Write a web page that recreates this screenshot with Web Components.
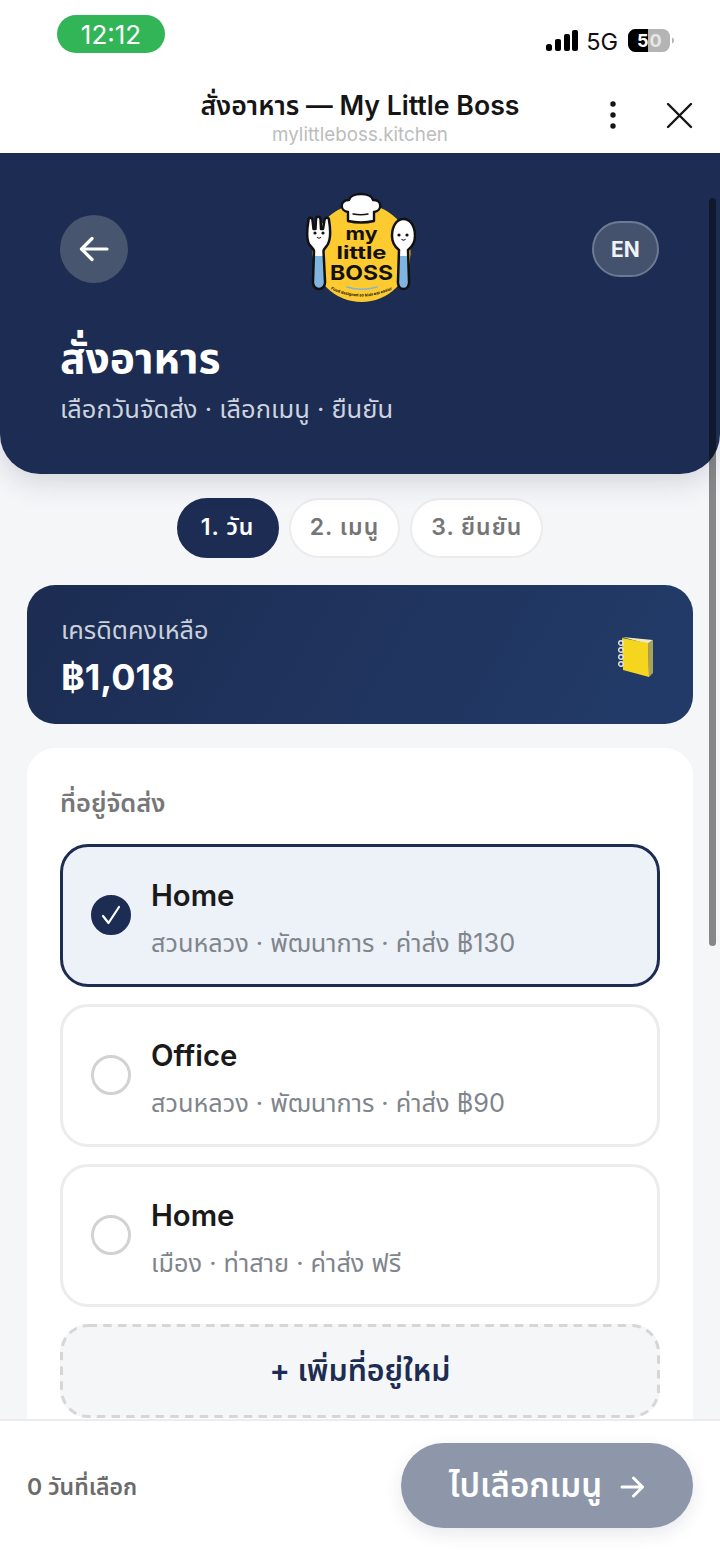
<!doctype html>
<html lang="th">
<head>
<meta charset="utf-8">
<title>สั่งอาหาร — My Little Boss</title>
<style>
  html, body { margin: 0; padding: 0; height: 100%; }
  body {
    font-family: Inter, "Noto Sans Thai", "Noto Sans Thai Looped", "Noto Sans", "Liberation Sans", sans-serif;
    background: #f5f6f8;
    overflow: hidden;
  }
  app-shell { width: 720px; height: 1558px; }
</style>
</head>
<body>

<template id="status-tmpl">
  <style>
    :host { display: flex; height: 70px; background: #fff; align-items: flex-start; justify-content: space-between; padding: 15px 46px 0 57px; box-sizing: border-box; }
    .time { width: 108px; height: 38px; border-radius: 19px; background: #32b557; color: #fff; font-size: 26px; line-height: 40px; text-align: center; }
    .right { display: flex; align-items: center; gap: 10px; margin-top: 14px; height: 24px; font-size: 23.500px; color: #111; }
    svg { display: block; }
    .bars { margin-right: -2px; margin-top: -1px; }
  </style>
  <div class="time"><slot name="time"></slot></div>
  <div class="right">
    <svg class="bars" width="32" height="21" viewBox="0 0 32 21"><rect x="0" y="14" width="6" height="7" rx="2.500"/><rect x="9" y="9" width="6" height="12" rx="2"/><rect x="18" y="4" width="6" height="17" rx="2"/><rect x="26" y="0" width="6" height="21" rx="2"/></svg>
    <slot name="net"></slot>
    <svg width="46" height="23" viewBox="0 0 46 23" font-family="Inter, sans-serif" font-size="18" font-weight="700" style="margin-top:-2px">
      <rect x="0" y="0" width="42" height="23" rx="7.500" fill="#b4b4b4"/>
      <path d="M7.500 0H20v23H7.500A7.500 7.500 0 0 1 0 15.500v-8A7.500 7.500 0 0 1 7.500 0z" fill="#000"/>
      <path d="M44 8.500c1.500.5 2 1.800 2 3s-.5 2.500-2 3z" fill="#b4b4b4"/>
      <text x="9" y="18" fill="#fff">5</text>
      <text x="21.500" y="18" fill="#e6e6e6">0</text>
    </svg>
  </div>
</template>

<template id="browser-tmpl">
  <style>
    :host { display: flex; flex-direction: column; align-items: center; height: 83px; background: #fff; position: relative; color: #151515; }
    .title { font-size: 26.700px; font-weight: 600; line-height: 36px; margin-top: 17px; }
    .domain { font-size: 18.800px; line-height: 24px; color: #bcbcbc; }
    .actions { position: absolute; right: 27px; top: 31px; display: flex; gap: 50px; align-items: center; }
    svg { display: block; }
  </style>
  <div class="title"><slot name="title"></slot></div>
  <div class="domain"><slot name="domain"></slot></div>
  <div class="actions">
    <svg width="6" height="28" viewBox="0 0 6 28" fill="#151515"><circle cx="3" cy="3" r="2.700"/><circle cx="3" cy="14" r="2.700"/><circle cx="3" cy="25" r="2.700"/></svg>
    <svg width="27" height="27" viewBox="0 0 27 27" stroke="#151515" stroke-width="2.400" stroke-linecap="round"><path d="M2 2l23 23M25 2L2 25"/></svg>
  </div>
</template>

<template id="logo-tmpl">
  <style>
    :host { display: block; width: 112px; height: 118px; }
    svg { display: block; }
    text { font-family: Inter, "Liberation Sans", sans-serif; }
  </style>
  <svg width="112" height="118" viewBox="0 0 112 118">
    <defs>
      <path id="fork" d="M4.500 29C4.500 26 8 26 8.500 29L9.500 38H11.500L12 28C12 25 16 25 16.500 28L17 38H19L20.500 29C21 26 25 26 25 29C26.500 38 26.500 48 24 53C22.500 56 20 57 19.500 60L21 90C21.500 95 18.500 98 15 98C11.500 98 8.500 95 9 90L10 60C9.500 57 7 56 5 53C2.500 48 3 38 4.500 29Z"/>
      <path id="spoon" d="M99.500 28C92 28 88 36 88 45C88 52 91 56 95 59L94 90C93.500 95 96 98 99.500 98C103 98 105.500 95 105 90L104 59C108 56 111 52 111 45C111 36 107 28 99.500 28Z"/>
      <clipPath id="fork-clip"><use href="#fork"/></clipPath>
      <clipPath id="spoon-clip"><use href="#spoon"/></clipPath>
      <path id="arc" d="M22 96Q57 115 93 96"/>
    </defs>
    <circle cx="57.500" cy="62" r="49" fill="#fdca30"/>
    <!-- chef hat -->
    <path d="M44 30V21C36 20 35 9 45 9C47 1 67 1 69 9C79 9 78 20 70 21V30Q57 33 44 30Z" fill="#fff" stroke="#111" stroke-width="2.400" stroke-linejoin="round"/>
    <path d="M49 23q8 1.500 15 0" fill="none" stroke="#111" stroke-width="1.500" stroke-linecap="round"/>
    <!-- fork -->
    <use href="#fork" fill="#fff"/>
    <rect x="0" y="65" width="30" height="35" fill="#7fb5de" clip-path="url(#fork-clip)"/>
    <use href="#fork" fill="none" stroke="#111" stroke-width="2.500" stroke-linejoin="round"/>
    <circle cx="11" cy="42" r="1.600" fill="#111"/><circle cx="19" cy="42" r="1.600" fill="#111"/>
    <path d="M13 46q2 2.500 4 0" fill="none" stroke="#111" stroke-width="1.100"/>
    <!-- spoon -->
    <use href="#spoon" fill="#fff"/>
    <rect x="85" y="65" width="30" height="35" fill="#7fb5de" clip-path="url(#spoon-clip)"/>
    <use href="#spoon" fill="none" stroke="#111" stroke-width="2.500" stroke-linejoin="round"/>
    <circle cx="95" cy="44" r="1.600" fill="#111"/><circle cx="103" cy="44" r="1.600" fill="#111"/>
    <path d="M97.500 48q2 2.500 4 0" fill="none" stroke="#111" stroke-width="1.100"/>
    <!-- wordmark, stretched because the real logo face is wider than Inter -->
    <text x="57.500" y="49" text-anchor="middle" font-size="18" font-weight="700" textLength="32" lengthAdjust="spacingAndGlyphs" fill="#111">my</text>
    <text x="57.500" y="68" text-anchor="middle" font-size="18" font-weight="700" textLength="50" lengthAdjust="spacingAndGlyphs" fill="#111">little</text>
    <text x="57.500" y="89" text-anchor="middle" font-size="20.500" font-weight="700" textLength="63" lengthAdjust="spacingAndGlyphs" fill="#111">BOSS</text>
    <path d="M43 96q14.500 4.500 30 0" fill="none" stroke="#7fb5de" stroke-width="1.600" stroke-linecap="round"/>
    <text font-size="4" font-weight="700" fill="#111"><textPath href="#arc" startOffset="50%" text-anchor="middle">Food designed so kids eat easier</textPath></text>
  </svg>
</template>

<template id="hero-tmpl">
  <style>
    :host { display: block; height: 321px; box-sizing: border-box; padding: 39px 61px 0 60px; background: #1c2c52; color: #fff; border-radius: 0 0 40px 40px; box-shadow: 0 8px 28px rgba(28,44,82,.16); position: relative; z-index: 1; }
    .top { display: flex; align-items: center; justify-content: space-between; height: 116px; }
    .back { width: 68px; height: 68px; border-radius: 50%; background: #48556f; display: flex; align-items: center; justify-content: center; margin-top: -2px; }
    .lang { width: 67px; height: 56px; box-sizing: border-box; border: 2px solid #6d7a92; border-radius: 28px; background: #45526d; font-size: 21px; font-weight: 700; display: flex; align-items: center; justify-content: center; color: #f0f2f6; margin-top: -2px; }
    h1 { margin: 22px 0 0; font-size: 42.500px; font-weight: 700; line-height: 56px; }
    p { margin: 6px 0 0; font-size: 25.500px; line-height: 34px; color: #cdd3df; }
    svg { display: block; }
  </style>
  <div class="top">
    <div class="back"><svg width="30" height="26" viewBox="0 0 30 26" fill="none" stroke="#fff" stroke-width="3.200" stroke-linecap="round" stroke-linejoin="round"><path d="M28 13H3M13 2.500L2.500 13 13 23.500"/></svg></div>
    <slot name="logo"></slot>
    <div class="lang"><slot name="lang"></slot></div>
  </div>
  <h1><slot name="title"></slot></h1>
  <p><slot name="sub"></slot></p>
</template>

<template id="step-tmpl">
  <style>
    :host { display: flex; align-items: center; justify-content: center; height: 60px; box-sizing: border-box; padding: 0 19px; border-radius: 30px; background: #fff; border: 2px solid #ececee; color: #757575; font-size: 23px; font-weight: 600; letter-spacing: 1px; }
    :host([active]) { background: #1c2c52; border-color: #1c2c52; color: #fff; min-width: 102px; }
  </style>
  <slot></slot>
</template>

<template id="credit-tmpl">
  <style>
    :host { display: flex; align-items: center; justify-content: space-between; height: 139px; box-sizing: border-box; margin: 27px 27px 0; padding: 4px 39px 0 34px; border-radius: 28px; background: linear-gradient(120deg, #1c2c52, #223a67 90%); color: #fff; }
    .label { font-size: 25.400px; line-height: 36px; color: #c9d0dc; margin-top: -1px; }
    .amount { font-size: 36px; font-weight: 700; line-height: 48px; margin-top: 5px; }
    svg { display: block; }
  </style>
  <div>
    <div class="label"><slot name="label"></slot></div>
    <div class="amount"><slot name="amount"></slot></div>
  </div>
  <svg width="36" height="40" viewBox="0 0 36 40">
    <path d="M4 0L35 3L30 7Z" fill="#efe9c4"/>
    <path d="M30 6L35 3V36L31 40Z" fill="#a9a25a"/>
    <path d="M4 1L30 6L31 40L5 33Z" fill="#f6d51f"/>
    <g fill="none" stroke="#e4e4e4" stroke-width="1.400"><circle cx="3" cy="6" r="2.300"/><circle cx="3" cy="13" r="2.300"/><circle cx="3" cy="20" r="2.300"/><circle cx="3" cy="27" r="2.300"/></g>
  </svg>
</template>

<template id="section-tmpl">
  <style>
    :host { display: block; margin: 24px 27px 0; padding: 37px 33px 40px; background: #fff; border-radius: 28px 28px 0 0; }
    .label { font-size: 25.400px; font-weight: 600; line-height: 36px; color: #777; margin-bottom: 23px; }
    .list { display: flex; flex-direction: column; gap: 17px; }
  </style>
  <div class="label"><slot name="label"></slot></div>
  <div class="list"><slot></slot></div>
</template>

<template id="address-tmpl">
  <style>
    :host { display: flex; align-items: center; height: 143px; box-sizing: border-box; padding: 0 28px; gap: 20px; background: #fff; border: 3px solid #ececee; border-radius: 28px; }
    :host([selected]) { background: #edf1f8; border-color: #1c2c52; }
    .radio { width: 40px; height: 40px; box-sizing: border-box; border-radius: 50%; border: 3px solid #d2d2d2; flex: none; display: flex; align-items: center; justify-content: center; margin-top: -2px; }
    :host([selected]) .radio { background: #1c2c52; border-color: #1c2c52; }
    .check { display: none; }
    :host([selected]) .check { display: block; }
    .text { padding-top: 6px; }
    .name { font-size: 29.300px; font-weight: 600; line-height: 38px; color: #1a1a1a; }
    .meta { font-size: 25.300px; line-height: 36px; color: #80858c; margin-top: 10px; }
  </style>
  <div class="radio"><svg class="check" width="20" height="20" viewBox="0 0 20 20" fill="none" stroke="#fff" stroke-width="2.200" stroke-linecap="round" stroke-linejoin="round"><path d="M2 11l5.500 7L18 2"/></svg></div>
  <div class="text">
    <div class="name"><slot name="name"></slot></div>
    <div class="meta"><slot name="meta"></slot></div>
  </div>
</template>

<template id="add-tmpl">
  <style>
    :host { display: flex; align-items: center; justify-content: center; height: 94px; box-sizing: border-box; padding-top: 2px; background: #f5f6f8; border-radius: 28px; color: #1c2c52; font-size: 30.300px; font-weight: 600; position: relative; }
    /* css dashed gives dashes that are too short, so the outline is drawn */
    svg { position: absolute; left: 0; top: 0; }
  </style>
  <svg width="600" height="94" fill="none"><rect x="1.500" y="1.500" width="597" height="91" rx="27" stroke="#d6d6d8" stroke-width="3" stroke-dasharray="8.500 6.200"/></svg>
  <slot></slot>
</template>

<template id="footer-tmpl">
  <style>
    :host { display: flex; align-items: center; justify-content: space-between; height: 139px; box-sizing: border-box; padding: 0 27px 8px; background: #fff; border-top: 2px solid #ececee; position: relative; z-index: 2; }
    .count { font-size: 23px; font-weight: 600; color: #6b6b6b; padding-top: 4px; }
    .go { display: flex; align-items: center; justify-content: center; gap: 18px; width: 292px; height: 85px; box-sizing: border-box; padding: 3px 0 0; border-radius: 43px; background: #8d97a9; color: #fff; font-size: 33px; font-weight: 600; box-shadow: 0 6px 18px rgba(28,44,82,.1); }
    svg { display: block; }
  </style>
  <div class="count"><slot name="count"></slot></div>
  <div class="go"><slot name="go"></slot>
    <svg width="25" height="22" viewBox="0 0 25 22" fill="none" stroke="#fff" stroke-width="3" stroke-linecap="round" stroke-linejoin="round"><path d="M2 11h20M13.500 2l9 9-9 9"/></svg>
  </div>
</template>

<template id="shell-tmpl">
  <style>
    :host { display: flex; flex-direction: column; position: relative; overflow: hidden; }
    .main { flex: 1; min-height: 0; overflow: hidden; }
    .scrollbar { position: absolute; left: 709px; top: 198px; width: 7px; height: 748px; border-radius: 4px; background: rgba(0,0,0,.45); z-index: 3; }
  </style>
  <slot name="top"></slot>
  <div class="main"><slot></slot></div>
  <slot name="bottom"></slot>
  <div class="scrollbar"></div>
</template>

<app-shell>
  <status-bar slot="top"><span slot="time">12:12</span><span slot="net">5G</span></status-bar>
  <browser-bar slot="top"><span slot="title">สั่งอาหาร — My Little Boss</span><span slot="domain">mylittleboss.kitchen</span></browser-bar>

  <order-hero>
    <brand-logo slot="logo"></brand-logo>
    <span slot="lang">EN</span>
    <span slot="title">สั่งอาหาร</span>
    <span slot="sub">เลือกวันจัดส่ง · เลือกเมนู · ยืนยัน</span>
  </order-hero>

  <step-row>
    <order-step active>1. วัน</order-step>
    <order-step>2. เมนู</order-step>
    <order-step>3. ยืนยัน</order-step>
  </step-row>

  <credit-card>
    <span slot="label">เครดิตคงเหลือ</span>
    <span slot="amount">฿1,018</span>
  </credit-card>

  <address-section>
    <span slot="label">ที่อยู่จัดส่ง</span>
    <address-item selected><span slot="name">Home</span><span slot="meta">สวนหลวง · พัฒนาการ · ค่าส่ง ฿130</span></address-item>
    <address-item><span slot="name">Office</span><span slot="meta">สวนหลวง · พัฒนาการ · ค่าส่ง ฿90</span></address-item>
    <address-item><span slot="name">Home</span><span slot="meta">เมือง · ท่าสาย · ค่าส่ง ฟรี</span></address-item>
    <add-address>+ เพิ่มที่อยู่ใหม่</add-address>
  </address-section>

  <order-footer slot="bottom"><span slot="count">0 วันที่เลือก</span><span slot="go">ไปเลือกเมนู</span></order-footer>
</app-shell>

<script>
  // every element is just its template in an open shadow root
  const fromTemplate = (tag, id) => customElements.define(tag, class extends HTMLElement {
    connectedCallback() {
      if (this.shadowRoot) return;
      this.attachShadow({ mode: 'open' });
      this.shadowRoot.append(document.getElementById(id).content.cloneNode(true));
    }
  });

  fromTemplate('app-shell', 'shell-tmpl');
  fromTemplate('status-bar', 'status-tmpl');
  fromTemplate('browser-bar', 'browser-tmpl');
  fromTemplate('brand-logo', 'logo-tmpl');
  fromTemplate('order-hero', 'hero-tmpl');
  fromTemplate('order-step', 'step-tmpl');
  fromTemplate('credit-card', 'credit-tmpl');
  fromTemplate('address-section', 'section-tmpl');
  fromTemplate('address-item', 'address-tmpl');
  fromTemplate('add-address', 'add-tmpl');
  fromTemplate('order-footer', 'footer-tmpl');

  customElements.define('step-row', class extends HTMLElement {
    connectedCallback() {
      this.attachShadow({ mode: 'open' });
      this.shadowRoot.innerHTML = `
        <style>:host { display: flex; justify-content: center; gap: 10px; margin-top: 24px; }</style>
        <slot></slot>`;
    }
  });
</script>
</body>
</html>
